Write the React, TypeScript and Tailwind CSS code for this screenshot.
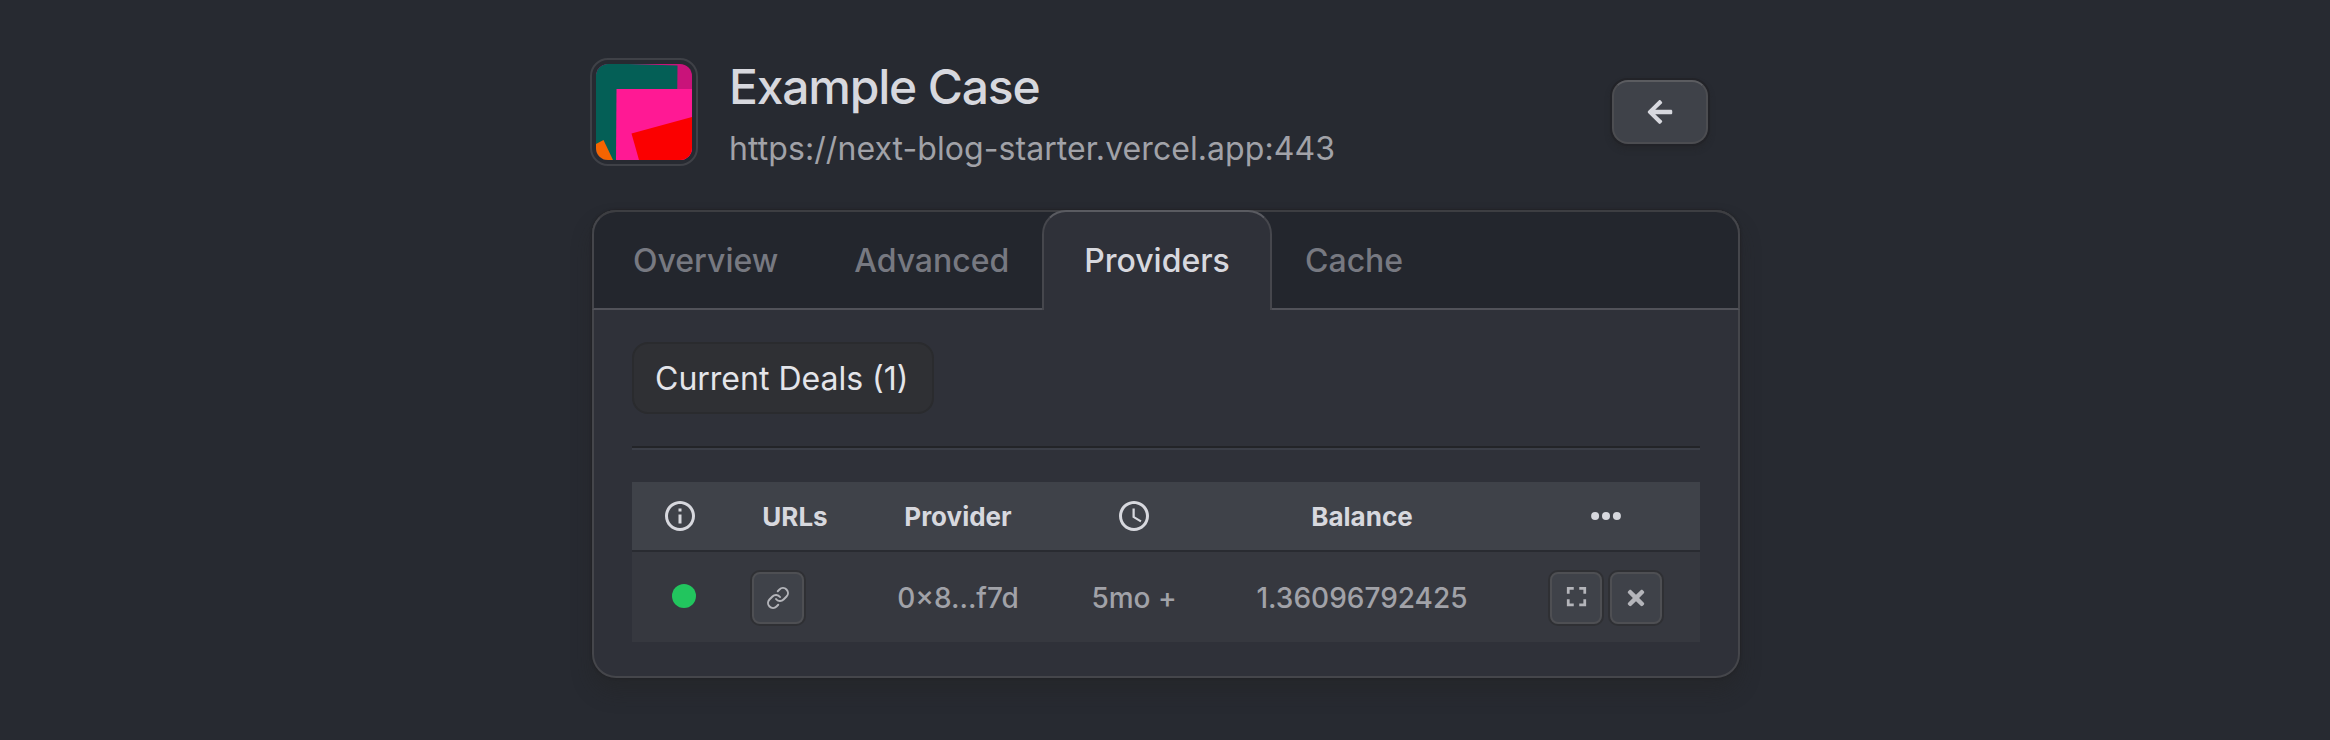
import React from "react";
import { FaArrowLeft, FaTimes } from "react-icons/fa";
import { FiLink } from "react-icons/fi";
import { MdAccessTime, MdFullscreen, MdInfoOutline } from "react-icons/md";

function Avatar() {
  return (
    <div className="h-[108px] w-[108px] shrink-0 rounded-[18px] border-2 border-[#3f4147] p-1">
      <svg viewBox="0 0 96 96" className="block h-24 w-24 rounded-xl">
        <rect width="96" height="96" fill="#c9137a" />
        <path d="M0 0L32 0L81.500 1.500L80.500 96H0Z" fill="#045f56" />
        <path d="M20.500 25H96V96H20Z" fill="#ff1994" />
        <path d="M35.500 69.500L96 53V96H43Z" fill="#fb0000" />
        <path d="M0 80L7.500 76L17 96H0Z" fill="#f56400" />
      </svg>
    </div>
  );
}

function IconButton({ children }: { children: React.ReactNode }) {
  return (
    <button className="flex h-[52px] w-[52px] shrink-0 items-center justify-center rounded-lg border-2 border-[#4e4f53] bg-[#3f4249] text-[#b4b5ba] shadow-[0_0_0_2px_#2f3034]">
      {children}
    </button>
  );
}

const inactive = "flex h-full items-center pt-0.5 text-[#777981]";

export default function App() {
  return (
    <main className="h-[740px] w-full overflow-hidden bg-[#272a31] pt-[58px] font-['Inter',sans-serif]">
      <header className="ml-[590px] flex h-[108px] w-[1118px] items-center">
        <Avatar />
        <div className="ml-[31px] flex flex-col">
          <h1 className="h-[60px] text-[48px] leading-[58px] font-medium tracking-[-0.025em] text-[#d7d8de]">Example Case</h1>
          <p className="h-12 pt-[7px] text-[32px] leading-[48px] tracking-[0.07px] text-[#a1a2a8]">https://next-blog-starter.vercel.app:443</p>
        </div>
        <button className="ml-auto flex h-16 w-24 items-center justify-center rounded-2xl border-2 border-[#4c4d51] border-t-[#5b5c60] bg-[#3f4249] text-[#d7d8de] shadow-[0_0_0_2px_#222328,0_4px_6px_rgba(34,34,34,0.5)]">
          <FaArrowLeft size={28} />
        </button>
      </header>

      <section className="mt-11 ml-[592px] h-[468px] w-[1148px] rounded-3xl border-2 border-[#45464b] bg-[#2f3139] shadow-[0_0_2px_1px_#222327,0_14px_20px_rgba(34,34,34,0.4)]">
        <nav className="-mx-0.5 -mt-0.5 flex h-[100px] rounded-t-3xl bg-[#23262d] text-[32px] font-medium shadow-[inset_0_2px_0_#3d3e42]">
          <div className="flex h-[100px] w-[450px] gap-[76px] rounded-tl-3xl border-t-2 border-b-2 border-l-2 border-t-[#3d3e42] border-b-[#515259] border-l-[#45464b] pl-[39px]">
            <span className={inactive}>Overview</span>
            <span className={inactive}>Advanced</span>
          </div>
          <div className="flex h-[100px] w-[230px] items-center justify-center rounded-t-3xl border-x-2 border-t-2 border-x-[#46474d] border-t-[#5a5b61] bg-[#2f3139] text-[#d7d8de]">
            Providers
          </div>
          <div className="flex h-[100px] flex-1 rounded-tr-3xl border-t-2 border-r-2 border-b-2 border-t-[#3d3e42] border-r-[#45464b] border-b-[#515259] pl-[33px]">
            <span className={inactive}>Cache</span>
          </div>
        </nav>

        <div className="px-[38px] pt-8">
          <div className="flex h-[72px] w-[302px] items-center rounded-2xl border-2 border-[#2a2b2e] bg-[#2f3034] pt-0.5 pl-[21px] text-[32px] text-[#e4e5ea]">
            Current Deals (1)
          </div>
          <div className="mt-8 h-1 border-t-2 border-b-2 border-t-[#232428] border-b-[#3b3e47]" />

          <div className="mt-8">
            <div className="flex h-[70px] items-center border-b-2 border-[#292b31] bg-[#3f4249] text-[26px] font-bold text-[#d7d8de]">
              <div className="w-24 pl-[30px]"><MdInfoOutline size={36} /></div>
              <div className="w-[132px] pl-0.5 text-center">URLs</div>
              <div className="w-[196px] text-center">Provider</div>
              <div className="flex w-[156px] justify-center"><MdAccessTime size={36} /></div>
              <div className="w-[300px] text-center">Balance</div>
              <div className="flex flex-1 justify-center">
                <svg width="30" height="10" viewBox="0 0 30 10" fill="currentColor">
                  <circle cx="4.100" cy="5" r="4" />
                  <circle cx="15" cy="5" r="4" />
                  <circle cx="25.900" cy="5" r="4" />
                </svg>
              </div>
            </div>
            <div className="flex h-[90px] items-center bg-[#36383f] pt-0.5 text-[28px] font-medium text-[#a1a2a8]">
              <div className="w-[120px] pl-10"><div className="-mt-1 h-6 w-6 rounded-full bg-[#22c55e]" /></div>
              <div className="w-[108px]"><IconButton><FiLink size={24} /></IconButton></div>
              <div className="w-[196px] text-center">0×8...f7d</div>
              <div className="w-[156px] text-center">5mo +</div>
              <div className="w-[300px] text-center">1.36096792425</div>
              <div className="ml-auto flex gap-2 pr-[38px]">
                <IconButton><MdFullscreen size={33} className="mb-[3px]" /></IconButton>
                <IconButton><FaTimes size={24} /></IconButton>
              </div>
            </div>
          </div>
        </div>
      </section>
    </main>
  );
}
